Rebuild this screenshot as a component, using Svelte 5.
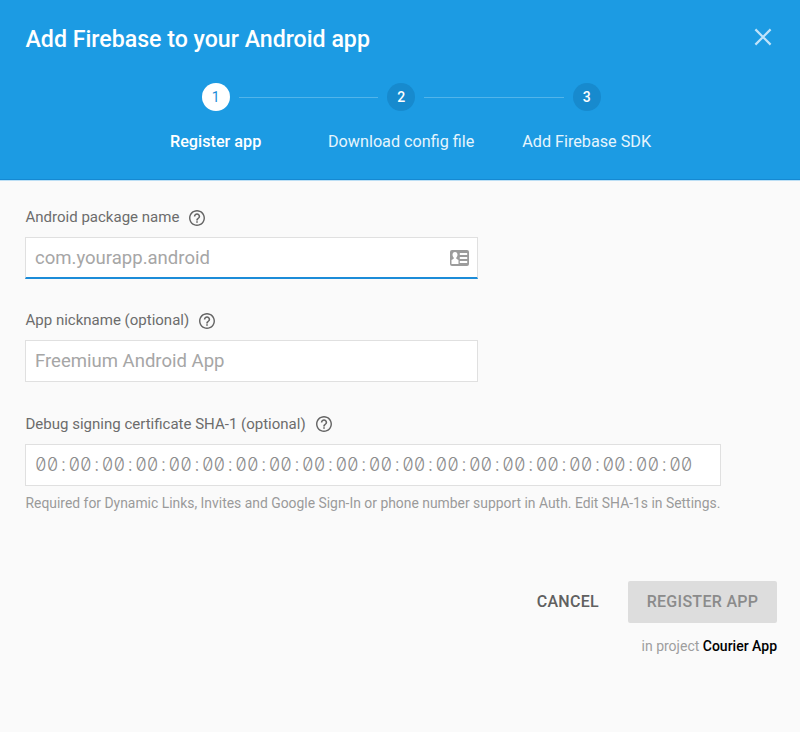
<script>
  const steps = [
    { label: 'Register app', active: true },
    { label: 'Download config file', active: false },
    { label: 'Add Firebase SDK', active: false }
  ];
  const fields = [
    { id: 'package', label: 'Android package name', placeholder: 'com.yourapp.android', focused: true },
    { id: 'nickname', label: 'App nickname (optional)', placeholder: 'Freemium Android App' },
    {
      id: 'sha',
      label: 'Debug signing certificate SHA-1 (optional)',
      pairs: Array(20).fill('00'),
      hint: 'Required for Dynamic Links, Invites and Google Sign-In or phone number support in Auth. Edit SHA-1s in Settings.'
    }
  ];
</script>

<div class="dialog">
  <header>
    <div class="top">
      <h1>Add Firebase to your Android app</h1>
      <button class="close" aria-label="Close">
        <svg width="18" height="18" viewBox="0 0 18 18"><path d="M1.4 1.4 16.6 16.6M16.6 1.4 1.4 16.6" /></svg>
      </button>
    </div>
    <ol>
      {#each steps as step, i}
        <li class:active={step.active}>
          <div class="track">
            <i class:line={i > 0}></i>
            <span class="num">{i + 1}</span>
            <i class:line={i < steps.length - 1}></i>
          </div>
          <span class="name">{step.label}</span>
        </li>
      {/each}
    </ol>
  </header>

  <main>
    {#each fields as f}
      <section class:wide={f.pairs}>
        <div class="label">
          <label for={f.id}>{f.label}</label>
          <svg width="16" height="16" viewBox="2 2 20 20"><path d="M11 18h2v-2h-2v2zm1-16C6.48 2 2 6.48 2 12s4.48 10 10 10 10-4.48 10-10S17.52 2 12 2zm0 18.2c-4.53 0-8.2-3.67-8.2-8.2S7.47 3.8 12 3.8s8.2 3.67 8.2 8.2-3.67 8.2-8.2 8.2zM12 6c-2.21 0-4 1.79-4 4h2c0-1.1.9-2 2-2s2 .9 2 2c0 2-3 1.75-3 5h2c0-2.25 3-2.5 3-5 0-2.21-1.79-4-4-4z" /></svg>
        </div>
        <div class="box" class:focused={f.focused}>
          {#if f.pairs}
            <span id={f.id} class="mono" role="textbox" tabindex="0">{#each f.pairs as p, i}{#if i}<span class="sep">:</span>{/if}{p}{/each}</span>
          {:else}
            <input id={f.id} placeholder={f.placeholder} />
          {/if}
          {#if f.focused}
            <svg class="card" width="19" height="16" viewBox="0 0 19 16">
              <path fill-rule="evenodd" d="M2 0h15a2 2 0 0 1 2 2v12a2 2 0 0 1-2 2H2a2 2 0 0 1-2-2V2a2 2 0 0 1 2-2zM5 2C3.4 2 2.5 3.2 2.5 4.8c0 1.2.5 2.1 1.2 2.7v1.2L1.5 10v4h7v-4L6.3 8.7V7.5c.7-.6 1.2-1.5 1.2-2.7C7.5 3.2 6.6 2 5 2zM9.8 3v2h7.4V3zM9.8 7v2h7.4V7zM9.8 11v2h7.4v-2z" />
            </svg>
          {/if}
        </div>
        {#if f.hint}<p class="hint">{f.hint}</p>{/if}
      </section>
    {/each}
    <footer>
      <div class="actions">
        <button class="cancel">CANCEL</button>
        <button class="register" disabled>REGISTER APP</button>
      </div>
      <p class="project"><span>in project</span> <b>Courier App</b></p>
    </footer>
  </main>
</div>

<style>
  :global(body) { margin: 0; background: #fafafa; }
  .dialog {
    box-sizing: border-box;
    width: 800px;
    height: 732px;
    background: #fafafa;
    font-family: Roboto, "Liberation Sans", sans-serif;
    overflow: hidden;
  }
  button { border: 0; padding: 0; background: none; font: inherit; }
  header {
    box-sizing: border-box;
    height: 181px;
    background: #1c9be3;
    border-bottom: 1px solid #bcdff5;
    box-shadow: inset 0 -1px #1589d2;
    color: #fff;
    padding: 24px 28px 0 25.5px;
  }
  .top { display: flex; justify-content: space-between; height: 59px; }
  h1 { margin: 0; padding-top: 1px; font-size: 23.15px; line-height: 30px; font-weight: 500; white-space: nowrap; }
  .close { height: 18px; margin-top: 4px; }
  .close svg { display: block; fill: none; stroke: #bfe3fa; stroke-width: 2.2; }
  ol { display: flex; list-style: none; margin: 0 0 0 97.4px; padding: 0; }
  li { width: 185.5px; display: flex; flex-direction: column; align-items: center; }
  .track { display: flex; align-items: center; width: 100%; height: 28px; }
  .track i { flex: 1; height: 1px; }
  .track i.line { background: #52b4ea; }
  .num {
    width: 28px; height: 28px; margin: 0 9px; border-radius: 50%;
    background: #178ace; font-size: 14px; line-height: 28px; font-weight: 500; text-align: center;
  }
  .active .num { background: #fff; color: #1c8cd8; font-weight: 400; }
  .name { margin-top: 21px; font-size: 16.2px; line-height: 20px; color: #e6f5fd; white-space: nowrap; }
  .active .name { font-weight: 500; color: #fff; }

  main { padding: 26px 23px 0 25px; }
  section { width: 453px; height: 103.3px; }
  section.wide { width: 696px; height: 167px; }
  .label { display: flex; align-items: center; gap: 10px; height: 20px; padding-left: .5px; font-size: 15.03px; color: #6c6c6c; white-space: nowrap; }
  .label svg { fill: #666; margin-top: 1px; }
  .box {
    box-sizing: border-box; display: flex; align-items: center;
    height: 42px; margin-top: 10px; padding: 0 8px 0 9px;
    border: 1px solid #e0e0e0; background: #fff;
  }
  .focused { border-bottom: 2px solid #1c8cd8; }
  input {
    flex: 1; min-width: 0; padding: 0; border: 0; outline: 0; background: none;
    font: 400 18.55px Roboto, sans-serif;
  }
  input::placeholder { color: #a6a6a6; opacity: 1; }
  .mono { font: 300 18px Inter, sans-serif; font-feature-settings: "tnum", "zero"; color: #8c8c8c; white-space: nowrap; }
  .sep { padding: 0 2.6px 0 2.65px; }
  .card { fill: #9c9c9c; }
  .hint { margin: 7px 0 0; padding-left: .5px; font-size: 13.9px; line-height: 20px; color: #9a9a9a; white-space: nowrap; }

  footer { display: flex; flex-direction: column; align-items: flex-end; }
  .actions { display: flex; align-items: center; gap: 29px; font-size: 16px; font-weight: 500; white-space: nowrap; }
  .actions button { letter-spacing: .3px; }
  .cancel { color: #606060; }
  .register { width: 149px; height: 42px; border-radius: 2px; background: #ddd; color: #8b8b8b; }
  .project { margin: 13px 0 0; font-size: 14px; line-height: 20px; color: #9e9e9e; }
  b { color: #000; font-weight: 500; }
</style>
